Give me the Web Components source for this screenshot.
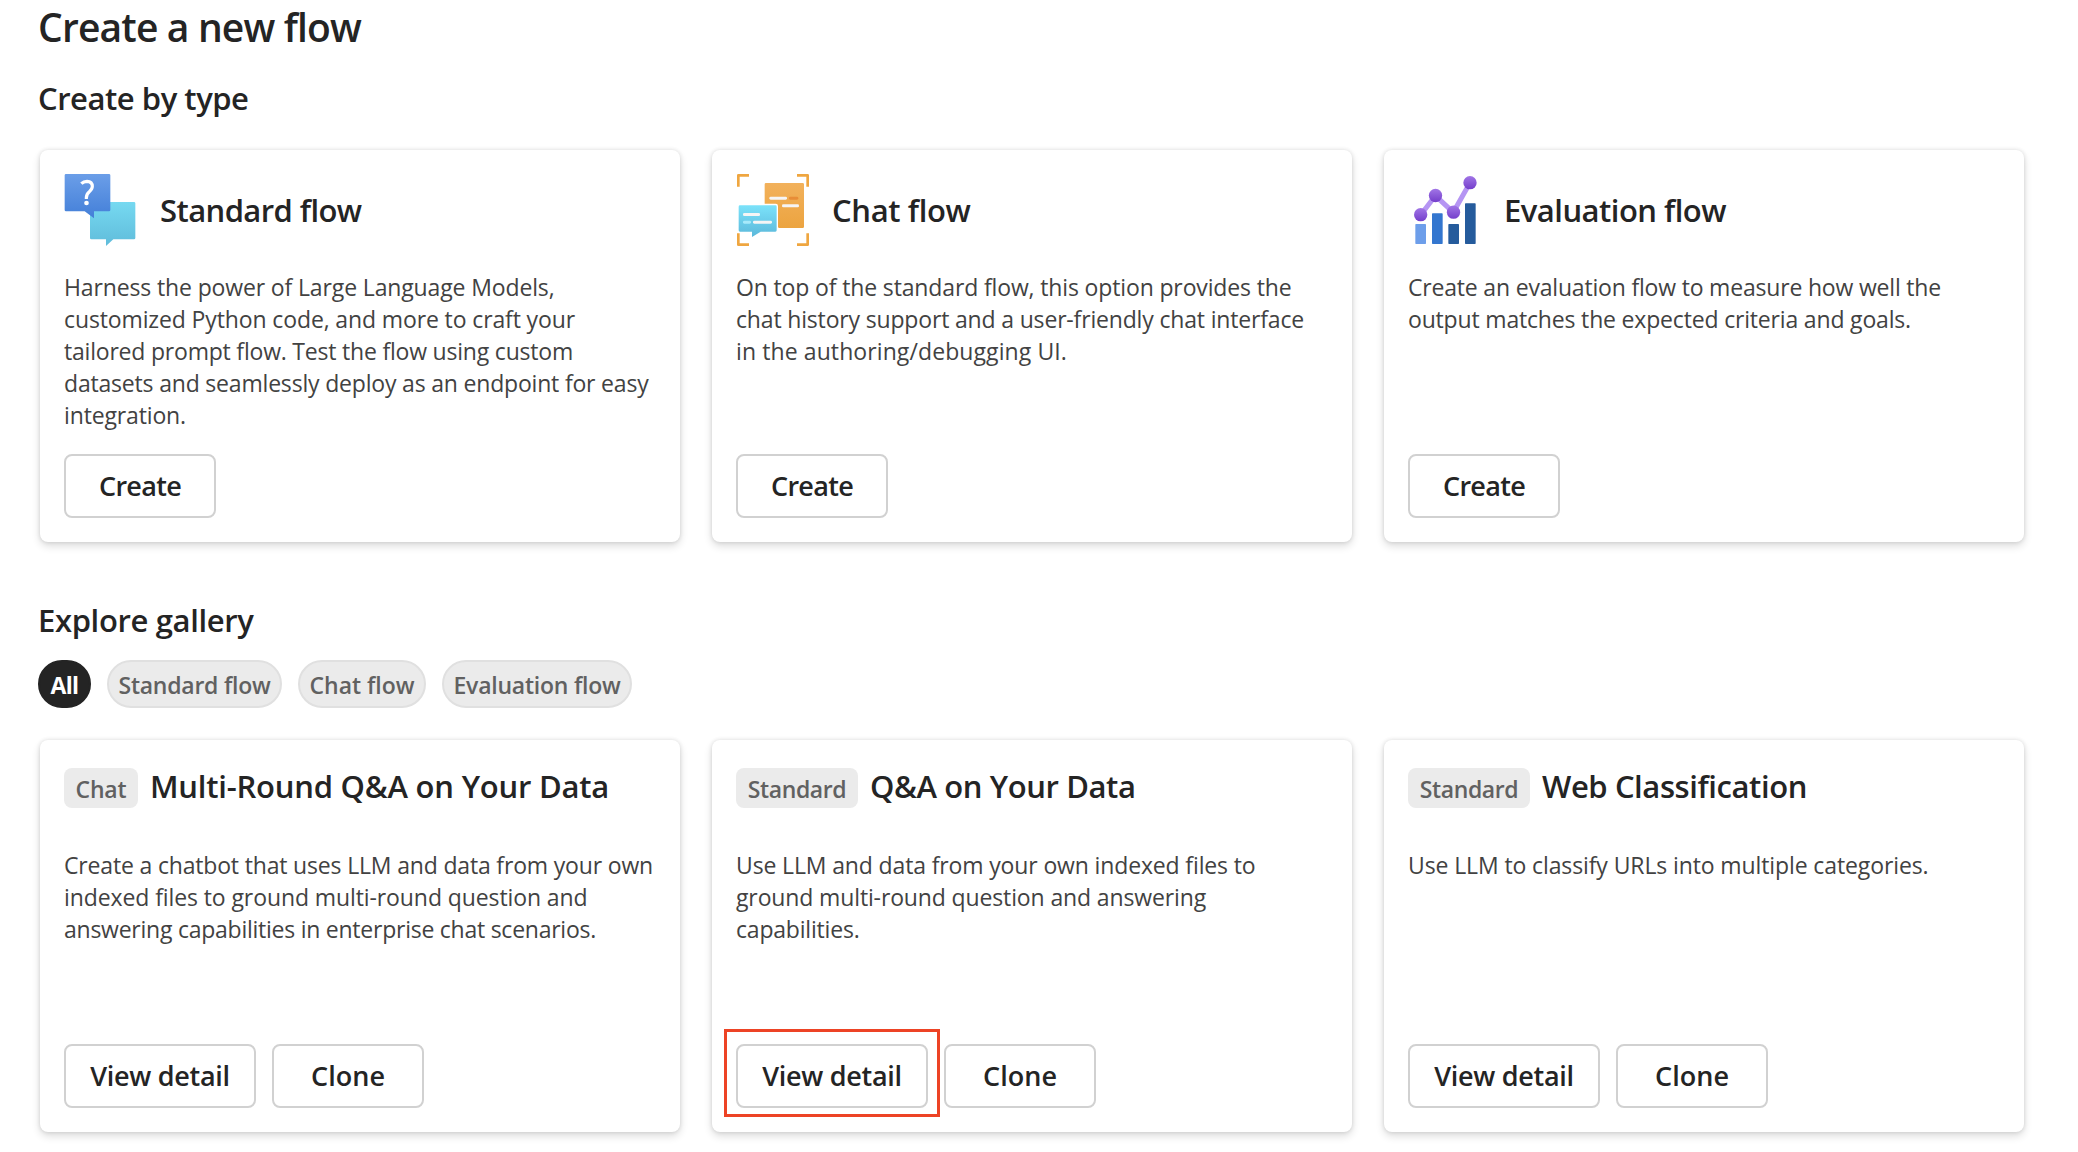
<!DOCTYPE html>
<html lang="en">
<head>
<meta charset="utf-8">
<title>Create a new flow</title>
<style>
html,body{margin:0;background:#fff;overflow:hidden}
body{font-family:"Open Sans","Noto Sans",sans-serif;color:#242424;width:2078px;height:1152px}
</style>
</head>
<body>
<flow-page>
  <flow-heading slot="title" level="1"><fit-text w="323">Create a new flow</fit-text></flow-heading>
  <flow-heading slot="types-title" level="2"><fit-text w="210.500">Create by type</fit-text></flow-heading>
  <type-card slot="types">
    <flow-icon slot="icon" name="standard"></flow-icon>
    <fit-text slot="title" w="201.500">Standard flow</fit-text>
    <fit-text w="490.500">Harness the power of Large Language Models,</fit-text>
    <fit-text w="511">customized Python code, and more to craft your</fit-text>
    <fit-text w="509">tailored prompt flow. Test the flow using custom</fit-text>
    <fit-text w="584.500">datasets and seamlessly deploy as an endpoint for easy</fit-text>
    <fit-text w="122">integration.</fit-text>
    <flow-button slot="actions"><fit-text w="82">Create</fit-text></flow-button>
  </type-card>
  <type-card slot="types">
    <flow-icon slot="icon" name="chat"></flow-icon>
    <fit-text slot="title" w="138.500">Chat flow</fit-text>
    <fit-text w="555.500">On top of the standard flow, this option provides the</fit-text>
    <fit-text w="568">chat history support and a user-friendly chat interface</fit-text>
    <fit-text w="331">in the authoring/debugging UI.</fit-text>
    <flow-button slot="actions"><fit-text w="82">Create</fit-text></flow-button>
  </type-card>
  <type-card slot="types">
    <flow-icon slot="icon" name="evaluation"></flow-icon>
    <fit-text slot="title" w="222">Evaluation flow</fit-text>
    <fit-text w="533">Create an evaluation flow to measure how well the</fit-text>
    <fit-text w="503">output matches the expected criteria and goals.</fit-text>
    <flow-button slot="actions"><fit-text w="82">Create</fit-text></flow-button>
  </type-card>

  <flow-heading slot="gallery-title" level="2"><fit-text w="215.500">Explore gallery</fit-text></flow-heading>
  <filter-pill slot="filters" selected style="width:53px"><fit-text w="28">All</fit-text></filter-pill>
  <filter-pill slot="filters" style="width:175px"><fit-text w="152">Standard flow</fit-text></filter-pill>
  <filter-pill slot="filters" style="width:128px"><fit-text w="105">Chat flow</fit-text></filter-pill>
  <filter-pill slot="filters" style="width:190px"><fit-text w="167">Evaluation flow</fit-text></filter-pill>

  <gallery-card slot="gallery">
    <flow-tag slot="tag" style="width:74px"><fit-text w="51">Chat</fit-text></flow-tag>
    <fit-text slot="title" w="459">Multi-Round Q&amp;A on Your Data</fit-text>
    <fit-text w="589">Create a chatbot that uses LLM and data from your own</fit-text>
    <fit-text w="523.500">indexed files to ground multi-round question and</fit-text>
    <fit-text w="532">answering capabilities in enterprise chat scenarios.</fit-text>
    <flow-button slot="actions" wide><fit-text w="139.500">View detail</fit-text></flow-button>
    <flow-button slot="actions"><fit-text w="74">Clone</fit-text></flow-button>
  </gallery-card>
  <gallery-card slot="gallery">
    <flow-tag slot="tag" style="width:122px"><fit-text w="98.500">Standard</fit-text></flow-tag>
    <fit-text slot="title" w="265.500">Q&amp;A on Your Data</fit-text>
    <fit-text w="519.500">Use LLM and data from your own indexed files to</fit-text>
    <fit-text w="470">ground multi-round question and answering</fit-text>
    <fit-text w="123.500">capabilities.</fit-text>
    <flow-button slot="actions" wide marked><fit-text w="139.500">View detail</fit-text></flow-button>
    <flow-button slot="actions"><fit-text w="74">Clone</fit-text></flow-button>
  </gallery-card>
  <gallery-card slot="gallery">
    <flow-tag slot="tag" style="width:122px"><fit-text w="98.500">Standard</fit-text></flow-tag>
    <fit-text slot="title" w="265">Web Classification</fit-text>
    <fit-text w="520.500">Use LLM to classify URLs into multiple categories.</fit-text>
    <flow-button slot="actions" wide><fit-text w="139.500">View detail</fit-text></flow-button>
    <flow-button slot="actions"><fit-text w="74">Clone</fit-text></flow-button>
  </gallery-card>
</flow-page>

<script>
function define(name, html, setup) {
  customElements.define(name, class extends HTMLElement {
    constructor() {
      super();
      this.attachShadow({ mode: "open" }).innerHTML = html;
    }
    connectedCallback() { if (setup) setup(this); }
  });
}

define("flow-page", `
<style>
:host{display:flex;flex-direction:column;padding:0 54px 0 38px;box-sizing:border-box;width:2078px}
.cards{display:grid;grid-template-columns:repeat(3,640px);gap:32px;margin-left:2px}
.filters{display:flex;gap:16px;height:48px}
.t1{margin-top:5px;height:44px}
.t2{margin-top:27px;height:44px}
.c1{margin-top:30px}
.t3{margin-top:56px;height:44px}
.filters{margin-top:18px}
.c2{margin-top:32px}
</style>
<div class="t1"><slot name="title"></slot></div>
<div class="t2"><slot name="types-title"></slot></div>
<div class="cards c1"><slot name="types"></slot></div>
<div class="t3"><slot name="gallery-title"></slot></div>
<div class="filters"><slot name="filters"></slot></div>
<div class="cards c2"><slot name="gallery"></slot></div>
`);

define("flow-heading", `
<style>
:host{display:block;font-weight:600;font-size:31px;line-height:44px}
:host([level="1"]){font-size:39px}
</style><slot></slot>`);

const cardBox = `
:host{display:flex;flex-direction:column;box-sizing:border-box;height:392px;padding:24px;border-radius:8px;background:#fff;
box-shadow:0 0 4px rgba(0,0,0,.12),0 4px 8px rgba(0,0,0,.14)}
.body{font-size:23px;line-height:32px;color:#424242}
.actions{display:flex;gap:16px;margin-top:auto}
`;

define("type-card", `
<style>${cardBox}
.head{display:flex;align-items:center;gap:24px;height:72px;font-size:31px;line-height:44px;font-weight:600}
.body{margin-top:25px}
</style>
<div class="head"><slot name="icon"></slot><slot name="title"></slot></div>
<div class="body"><slot></slot></div>
<div class="actions"><slot name="actions"></slot></div>`);

define("gallery-card", `
<style>${cardBox}
.head{display:flex;align-items:flex-start;gap:12px;height:44px;font-size:31px;line-height:44px;font-weight:600}
.body{margin-top:41px}
</style>
<div class="head"><slot name="tag"></slot><slot name="title"></slot></div>
<div class="body"><slot></slot></div>
<div class="actions"><slot name="actions"></slot></div>`);

define("flow-tag", `
<style>
:host{display:flex;justify-content:center;align-items:center;box-sizing:border-box;height:40px;margin-top:4px;border-radius:8px;
background:#ebebeb;color:#616161;font-size:23px;line-height:40px;font-weight:600}
slot{display:block;padding-top:2px}
</style><slot></slot>`);

define("filter-pill", `
<style>
:host{display:flex;justify-content:center;align-items:center;box-sizing:border-box;height:48px;border:2px solid #e0e0e0;border-radius:24px;
background:#ebebeb;color:#616161;font-size:23px;line-height:44px;font-weight:600}
:host([selected]){background:#242424;border-color:#242424;color:#fff;font-weight:700}
slot{display:block;padding-top:2px}
</style><slot></slot>`);

define("flow-button", `
<style>
:host{display:block;position:relative;width:152px;height:64px}
:host([wide]){width:192px}
button{all:unset;display:flex;justify-content:center;align-items:center;box-sizing:border-box;width:100%;height:100%;
border:2px solid #d1d1d1;border-radius:8px;background:#fff;font-weight:600;font-size:27px;line-height:40px;color:#242424}
:host([marked])::after{content:"";position:absolute;inset:-15.500px -12px -9px;border:3px solid #ed4325}
</style><button><slot></slot></button>`);

const icons = {
standard: ["42 42 216 216", `
<defs>
<linearGradient id="b" x2="0" y2="1"><stop stop-color="#6b9ee8"/><stop offset="1" stop-color="#437fd8"/></linearGradient>
<linearGradient id="c" x2="0" y2="1"><stop stop-color="#76d9f1"/><stop offset="1" stop-color="#60bcdb"/></linearGradient>
</defs>
<path fill="url(#c)" d="M124 126H252a4 4 0 0 1 4 4V234a4 4 0 0 1-4 4H190L168 258V238H124a4 4 0 0 1-4-4V130a4 4 0 0 1 4-4Z"/>
<path fill="url(#b)" d="M48 42H177a4 4 0 0 1 4 4V150a4 4 0 0 1-4 4H132V175L104 154H48a4 4 0 0 1-4-4V46a4 4 0 0 1 4-4Z"/>
<path fill="none" stroke="#fff" stroke-width="9.500" d="M94 71Q101 64 111 64Q127 65 127 79Q127 88 118 95Q109 102 109 114V117"/>
<circle cx="109.500" cy="129" r="7" fill="#fff"/>`],
chat: ["33 42 216 216", `
<defs>
<linearGradient id="o" x2="0" y2="1"><stop stop-color="#f2b15b"/><stop offset="1" stop-color="#eca440"/></linearGradient>
<linearGradient id="c" x2="0" y2="1"><stop stop-color="#7be2fa"/><stop offset="1" stop-color="#5bb8da"/></linearGradient>
</defs>
<path fill="none" stroke="#efa640" stroke-width="8" stroke-linejoin="round" d="M40 80V46H72M216 46H248V80M248 220V254H216M72 254H40V220"/>
<path fill="url(#o)" d="M123 69H233a4 4 0 0 1 4 4V200a4 4 0 0 1-4 4H163a4 4 0 0 1-4-4V138Q159 131 152 131H119V73a4 4 0 0 1 4-4Z"/>
<path fill="url(#c)" d="M45 136H151a4 4 0 0 1 4 4V211a4 4 0 0 1-4 4H107L81 231V215H45a4 4 0 0 1-4-4V140a4 4 0 0 1 4-4Z"/>
<g fill="#f5f5f5"><rect x="133" y="110" width="53" height="9" rx="4"/><rect x="171" y="133" width="51" height="9" rx="4"/>
<rect x="54" y="159" width="51" height="9" rx="4"/><rect x="84" y="182" width="57" height="9" rx="4"/></g>
<rect x="192" y="110" width="28" height="9" rx="4" fill="#e88d37"/>
<rect x="54" y="182" width="24" height="9" rx="4" fill="#a7e9fa"/>`],
evaluation: ["24 42 216 216", `
<defs><linearGradient id="p" x2="0" y2="1"><stop stop-color="#a175e6"/><stop offset="1" stop-color="#743ecb"/></linearGradient></defs>
<rect x="46" y="192" width="32" height="60" rx="2" fill="#6d9eea"/>
<rect x="96" y="160" width="32" height="92" rx="2" fill="#3376cf"/>
<rect x="145" y="192" width="32" height="60" rx="2" fill="#255b9c"/>
<rect x="195" y="130" width="32" height="122" rx="2" fill="#255b9c"/>
<path fill="none" stroke="#b595f3" stroke-width="15" stroke-linejoin="round" d="M62 165L106 107L160 157L210 68"/>
<g fill="url(#p)"><circle cx="62" cy="164" r="20"/><circle cx="106.500" cy="106.500" r="20"/><circle cx="160.500" cy="156.500" r="20"/><circle cx="210" cy="68" r="20"/></g>`]
};
define("flow-icon", `<style>:host{display:block;width:72px;height:72px;flex:none}svg{display:block;overflow:visible}</style><div></div>`, el => {
  const [box, art] = icons[el.getAttribute("name")];
  el.shadowRoot.querySelector("div").innerHTML = `<svg width="72" height="72" viewBox="${box}" aria-hidden="true">${art}</svg>`;
});

/* One line of text, tracked so that it fills the width in its w attribute. */
define("fit-text", `<style>:host{display:block;white-space:nowrap}</style><span><slot></slot></span>`, el => {
  const span = el.shadowRoot.querySelector("span");
  const natural = span.getBoundingClientRect().width;
  const gap = (+el.getAttribute("w") - natural) / el.textContent.length;
  span.style.letterSpacing = gap.toFixed(3) + "px";
});
</script>
</body>
</html>
